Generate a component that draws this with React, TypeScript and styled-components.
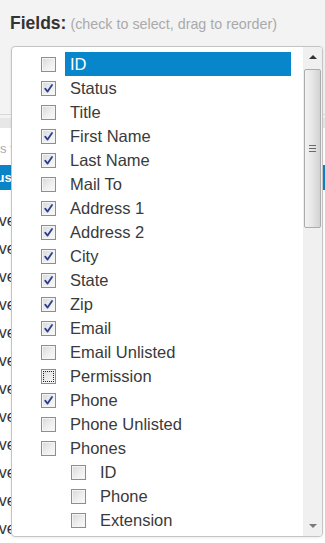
import styled, { createGlobalStyle } from "styled-components";

const GlobalStyle = createGlobalStyle`
  html, body {
    margin: 0;
    padding: 0;
  }
  body {
    background: #f3f3f3;
    font-family: "Liberation Sans", Arial, sans-serif;
  }
`;

type Field = {
  name: string;
  checked?: boolean;
  active?: boolean;
  focused?: boolean;
  children?: Field[];
};

const FIELDS: Field[] = [
  { name: "ID", active: true },
  { name: "Status", checked: true },
  { name: "Title" },
  { name: "First Name", checked: true },
  { name: "Last Name", checked: true },
  { name: "Mail To" },
  { name: "Address 1", checked: true },
  { name: "Address 2", checked: true },
  { name: "City", checked: true },
  { name: "State", checked: true },
  { name: "Zip", checked: true },
  { name: "Email", checked: true },
  { name: "Email Unlisted" },
  { name: "Permission", focused: true },
  { name: "Phone", checked: true },
  { name: "Phone Unlisted" },
  {
    name: "Phones",
    children: [{ name: "ID" }, { name: "Phone" }, { name: "Extension" }],
  },
];

const ROWS = [
  ["Active", "Maria", "Anders"],
  ["Active", "Ana", "Trujillo"],
  ["Active", "Antonio", "Moreno"],
  ["Active", "Thomas", "Hardy"],
  ["Active", "Christina", "Berglund"],
  ["Active", "Hanna", "Moos"],
  ["Active", "Frédérique", "Citeaux"],
  ["Active", "Martín", "Sommer"],
  ["Active", "Laurence", "Lebihan"],
  ["Active", "Elizabeth", "Lincoln"],
  ["Active", "Victoria", "Ashworth"],
  ["Active", "Patricio", "Simpson"],
  ["Active", "Laurena", "Kellag"],
];

const Page = styled.div`
  position: relative;
  width: 325px;
  height: 543px;
  overflow: hidden;
`;

const Header = styled.div`
  height: 44px;
  box-sizing: border-box;
  padding: 13px 10px 0;
  white-space: nowrap;
`;

const Title = styled.span`
  font-size: 17.5px;
  font-weight: bold;
  color: #333;
`;

const Hint = styled.span`
  font-size: 14.3px;
  color: #aaa;
  margin-left: 4px;
`;

const Toolbar = styled.div`
  height: 70px;
  border-bottom: 1px solid #d9d9d9;
`;

const TabStrip = styled.div`
  height: 10px;
  margin-top: 3px;
  background: #e7e7e7;
`;

const SearchRow = styled.div`
  height: 37px;
  background: #fff;
  overflow: hidden;
  white-space: nowrap;
  font-size: 13px;
  line-height: 37px;
  color: #aaa;
  padding-top: 2px;
  box-sizing: border-box;
`;

const SearchText = styled.span`
  display: inline-block;
  margin-left: -57px;
`;

const Grid = styled.div`
  background: #fff;
  overflow: hidden;
  height: 400px;
`;

const GridInner = styled.div`
  margin-left: -28px;
`;

const Row = styled.div<{ $head?: boolean }>`
  display: grid;
  grid-template-columns: 71px 195px 120px;
  height: ${(p) => (p.$head ? "25px" : "28px")};
  line-height: ${(p) => (p.$head ? "25px" : "28px")};
  background: ${(p) => (p.$head ? "#0a84c6" : "#fff")};
  color: ${(p) => (p.$head ? "#fff" : "#333")};
  font-size: ${(p) => (p.$head ? "13px" : "16px")};
  font-weight: ${(p) => (p.$head ? "bold" : "normal")};
  white-space: nowrap;
`;

const FilterGap = styled.div`
  height: 17px;
`;

const Dropdown = styled.div`
  position: absolute;
  top: 46px;
  left: 11px;
  width: 312px;
  height: 491px;
  box-sizing: border-box;
  border: 1px solid #c4c4c4;
  border-radius: 4px;
  background: #fff;
  box-shadow: 0 1px 3px rgba(0, 0, 0, 0.08);
  display: flex;
  overflow: hidden;
`;

const List = styled.ul<{ $nested?: boolean }>`
  list-style: none;
  margin: 0;
  padding: ${(p) => (p.$nested ? "0 0 0 30px" : "5px 12px 0 29px")};
  flex: ${(p) => (p.$nested ? "none" : "1")};
  overflow: hidden;
`;

const Item = styled.div`
  display: flex;
  align-items: center;
  height: 24px;
`;

const Box = styled.span<{ $focused?: boolean }>`
  position: relative;
  flex: none;
  width: 15px;
  height: 15px;
  box-sizing: border-box;
  border: 1px solid #8e8e8e;
  background: linear-gradient(135deg, #d8d8d8 0%, #eeeeee 55%, #fbfbfb 100%);
  box-shadow: inset 0 0 0 1px #f4f4f4;

  &::after {
    content: "";
    display: ${(p) => (p.$focused ? "block" : "none")};
    position: absolute;
    inset: 1px;
    border: 1px dotted #222;
  }

  svg {
    position: absolute;
    left: 0;
    top: 0;
  }
`;

const Label = styled.span<{ $active?: boolean }>`
  flex: 1;
  margin-left: 9px;
  padding: 0 5px;
  height: 24px;
  line-height: 24px;
  font-size: 16.5px;
  color: ${(p) => (p.$active ? "#fff" : "#3a3a3a")};
  background: ${(p) => (p.$active ? "#0786cc" : "transparent")};
  white-space: nowrap;
`;

const Scrollbar = styled.div`
  flex: none;
  width: 19px;
  background: #f0f0f0;
  display: flex;
  flex-direction: column;
  align-items: center;
`;

const Arrow = styled.div<{ $down?: boolean }>`
  height: 20px;
  display: flex;
  align-items: center;
  justify-content: center;

  &::before {
    content: "";
    border-left: 4px solid transparent;
    border-right: 4px solid transparent;
    ${(p) =>
      p.$down
        ? "border-top: 4px solid #7a7a7a;"
        : "border-bottom: 4px solid #333;"}
  }
`;

const Thumb = styled.div`
  margin-top: 2px;
  width: 17px;
  height: 159px;
  box-sizing: border-box;
  border: 1px solid #acacac;
  border-radius: 2px;
  background: linear-gradient(to right, #f2f2f2 0%, #e6e6e6 50%, #d2d2d2 100%);
  display: flex;
  flex-direction: column;
  align-items: center;
  justify-content: center;
  gap: 2px;
`;

const Grip = styled.span`
  width: 7px;
  height: 1px;
  background: #6a6a6a;
`;

const Spacer = styled.div`
  flex: 1;
`;

const Check = () => (
  <svg width="13" height="13" viewBox="0 0 13 13">
    <path
      d="M3.2 6.6 L5.6 9.6 L10 3"
      fill="none"
      stroke="#2c3f8e"
      strokeWidth="1.8"
      strokeLinecap="round"
      strokeLinejoin="round"
    />
  </svg>
);

const FieldItem = ({ field }: { field: Field }) => (
  <li>
    <Item>
      <Box $focused={field.focused}>{field.checked && <Check />}</Box>
      <Label $active={field.active}>{field.name}</Label>
    </Item>
    {field.children && (
      <List $nested>
        {field.children.map((c) => (
          <FieldItem key={c.name} field={c} />
        ))}
      </List>
    )}
  </li>
);

export default function App() {
  return (
    <>
      <GlobalStyle />
      <Page>
        <Header>
          <Title>Fields:</Title>
          <Hint>(check to select, drag to reorder)</Hint>
        </Header>
        <Toolbar />
        <TabStrip />
        <SearchRow>
          <SearchText>Filter items for a column</SearchText>
        </SearchRow>
        <Grid>
          <GridInner>
            <Row $head>
              <span>Status</span>
              <span>First Name</span>
              <span>Last Name</span>
            </Row>
            <FilterGap />
            {ROWS.map((r, i) => (
              <Row key={i}>
                {r.map((c, j) => (
                  <span key={j}>{c}</span>
                ))}
              </Row>
            ))}
          </GridInner>
        </Grid>

        <Dropdown>
          <List>
            {FIELDS.map((f) => (
              <FieldItem key={f.name} field={f} />
            ))}
          </List>
          <Scrollbar>
            <Arrow />
            <Thumb>
              <Grip />
              <Grip />
              <Grip />
            </Thumb>
            <Spacer />
            <Arrow $down />
          </Scrollbar>
        </Dropdown>
      </Page>
    </>
  );
}
